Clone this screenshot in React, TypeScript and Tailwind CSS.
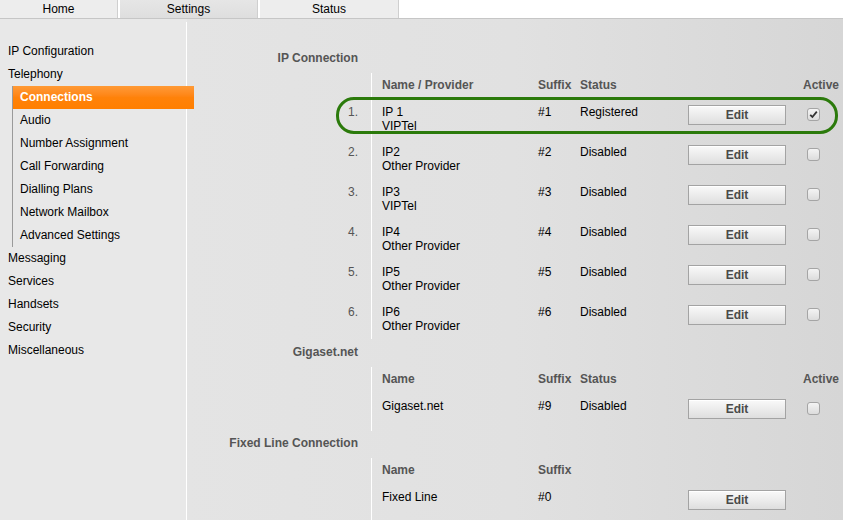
import React from "react";

const font = { fontFamily: '"Liberation Sans", Arial, sans-serif' };

function Checkbox({ checked }: { checked?: boolean }) {
  return (
    <div className="w-[13px] h-[13px] rounded-[3px] border border-[#a5a5a5] bg-gradient-to-b from-[#f4f4f4] to-[#dcdcdc] flex items-center justify-center">
      {checked && (
        <svg width="9" height="9" viewBox="0 0 9 9">
          <path d="M1.2 4.8 L3.4 7 L7.8 1.6" fill="none" stroke="#333" strokeWidth="1.8" />
        </svg>
      )}
    </div>
  );
}

function EditBtn() {
  return (
    <div className="w-[98px] h-[20px] border border-[#a3a3a3] bg-gradient-to-b from-[#f9f9f9] via-[#ececec] to-[#dedede] flex items-center justify-center text-[12px] font-bold text-[#4a4a4a] shadow-[inset_0_1px_0_#ffffff]">
      Edit
    </div>
  );
}

function Header({ name, status, active }: { name: string; status?: boolean; active?: boolean }) {
  return (
    <div className="flex h-[26px] pt-[5px] text-[12px] leading-[14px] font-bold text-[#555]">
      <div className="w-[184px]" />
      <div className="flex border-l border-white pl-[10px] h-[26px] -mt-[5px] pt-[5px]">
        <div className="w-[156px]">{name}</div>
        <div className="w-[42px]">Suffix</div>
        <div className="w-[108px]">{status ? "Status" : ""}</div>
        <div className="w-[98px]" />
        <div className="pl-[17px]">{active ? "Active" : ""}</div>
      </div>
    </div>
  );
}

function Row({
  num,
  l1,
  l2,
  suffix,
  status,
  checked,
  noCheck,
  h = 40,
}: {
  num?: string;
  l1: string;
  l2?: string;
  suffix: string;
  status?: string;
  checked?: boolean;
  noCheck?: boolean;
  h?: number;
}) {
  return (
    <div className="flex text-[12px] leading-[14px] text-black" style={{ height: h }}>
      <div className="w-[184px] pr-[13px] pt-[6px] text-right text-[#555]">{num}</div>
      <div className="flex border-l border-white pl-[10px]">
        <div className="w-[156px] pt-[6px]">
          <div>{l1}</div>
          {l2 && <div>{l2}</div>}
        </div>
        <div className="w-[42px] pt-[6px]">{suffix}</div>
        <div className="w-[108px] pt-[6px]">{status}</div>
        <div className="w-[98px] pt-[6px]">
          <EditBtn />
        </div>
        <div className="pl-[21px] pt-[9px]">{!noCheck && <Checkbox checked={checked} />}</div>
      </div>
    </div>
  );
}

function Heading({ children, h = 28, pt = 6 }: { children: React.ReactNode; h?: number; pt?: number }) {
  return (
    <div className="flex text-[12px] leading-[14px] font-bold text-[#555]" style={{ height: h, paddingTop: pt }}>
      <div className="w-[184px] pr-[13px] text-right whitespace-nowrap">{children}</div>
    </div>
  );
}

export default function App() {
  const sideTop = ["IP Configuration", "Telephony"];
  const sub = ["Connections", "Audio", "Number Assignment", "Call Forwarding", "Dialling Plans", "Network Mailbox", "Advanced Settings"];
  const sideBottom = ["Messaging", "Services", "Handsets", "Security", "Miscellaneous"];
  return (
    <div className="w-[843px] h-[520px] overflow-hidden relative bg-white" style={font}>
      {/* Tabs */}
      <div className="flex h-[18px] bg-white text-[12px] leading-[18px] text-black">
        <div className="w-[118px] bg-[#ededed] border-r border-[#cfcfcf] text-center">Home</div>
        <div className="w-[2px]" />
        <div className="w-[138px] bg-gradient-to-b from-[#e6e6e6] to-[#dedede] border-r border-[#cfcfcf] text-center">Settings</div>
        <div className="w-[2px]" />
        <div className="w-[139px] bg-[#ededed] border-r border-[#cfcfcf] text-center">Status</div>
      </div>
      <div className="h-[1px] bg-[#c6c6c6]" />
      <div className="flex h-[501px]">
        {/* Sidebar */}
        <div className="w-[186px] bg-[#e8e8e8] pt-[21px] text-[12px] leading-[23px] text-black relative z-10">
          {sideTop.map((s) => (
            <div key={s} className="pl-[8px] h-[23px]">{s}</div>
          ))}
          <div className="ml-[12px] border-l border-[#9a9a9a]">
            {sub.map((s, i) =>
              i === 0 ? (
                <div
                  key={s}
                  className="w-[181px] h-[23px] pl-[7px] font-bold text-white bg-gradient-to-b from-[#ff9a35] via-[#ff8209] to-[#ff7f00]"
                >
                  {s}
                </div>
              ) : (
                <div key={s} className="pl-[7px] h-[23px]">{s}</div>
              )
            )}
          </div>
          {sideBottom.map((s) => (
            <div key={s} className="pl-[8px] h-[23px]">{s}</div>
          ))}
        </div>
        <div className="w-[1px] bg-[#e8e8e8] flex flex-col">
          <div className="h-[3px]" />
          <div className="flex-1 bg-white" />
        </div>
        {/* Main */}
        <div className="flex-1 bg-gradient-to-r from-[#e4e4e4] via-[#e1e1e1] to-[#d6d6d6] pt-[26px]">
          <Heading>IP Connection</Heading>
          <Header name="Name / Provider" status active />
          <Row num="1." l1="IP 1" l2="VIPTel" suffix="#1" status="Registered" checked />
          <Row num="2." l1="IP2" l2="Other Provider" suffix="#2" status="Disabled" />
          <Row num="3." l1="IP3" l2="VIPTel" suffix="#3" status="Disabled" />
          <Row num="4." l1="IP4" l2="Other Provider" suffix="#4" status="Disabled" />
          <Row num="5." l1="IP5" l2="Other Provider" suffix="#5" status="Disabled" />
          <Row num="6." l1="IP6" l2="Other Provider" suffix="#6" status="Disabled" />
          <Heading>Gigaset.net</Heading>
          <Header name="Name" status active />
          <Row l1="Gigaset.net" suffix="#9" status="Disabled" h={38} />
          <Heading h={27} pt={5}>Fixed Line Connection</Heading>
          <Header name="Name" />
          <Row l1="Fixed Line" suffix="#0" noCheck h={40} />
        </div>
      </div>
      {/* Highlight */}
      <div className="absolute left-[336px] top-[97px] w-[502px] h-[37px] border-[3px] border-[#2b7a0b] rounded-[18px] pointer-events-none" />
    </div>
  );
}
